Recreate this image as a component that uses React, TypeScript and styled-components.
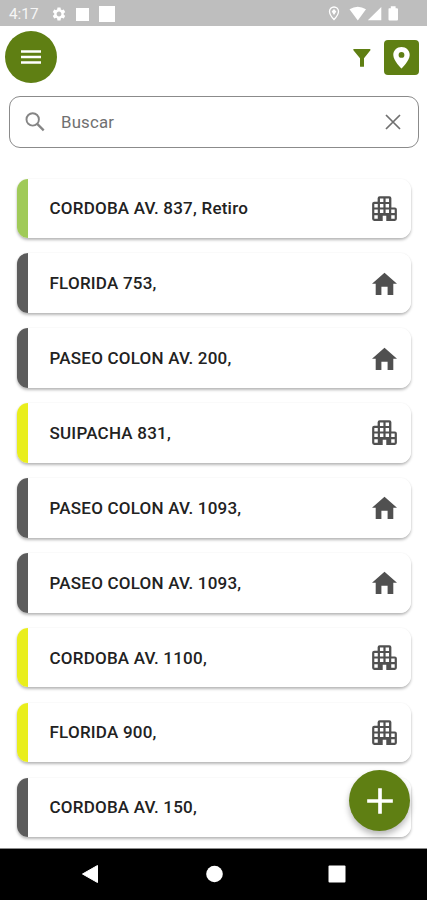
import React from "react";
import styled, { createGlobalStyle } from "styled-components";
import { MdAdd, MdSettings } from "react-icons/md";

const GREEN = "#5f7f13";

const GlobalStyle = createGlobalStyle`
  * { box-sizing: border-box; }
  body { margin: 0; background: #fff; font-family: Roboto, sans-serif; }
  button { border: 0; padding: 0; font: inherit; }
  svg { display: block; flex-shrink: 0; }
`;

const Screen = styled.div`
  width: 427px;
  height: 900px;
  display: flex;
  flex-direction: column;
  background: #fff;
  overflow: hidden;
`;

const StatusBar = styled.div`
  height: 26px;
  flex-shrink: 0;
  display: flex;
  justify-content: space-between;
  align-items: center;
  padding: 2px 29px 0 9px;
  background: #bebebe;
  color: #fff;
`;

const StatusGroup = styled.div`
  display: flex;
  align-items: center;
`;

const Clock = styled.span`
  width: 42px;
  font-size: 15.3px;
  line-height: 20px;
  color: #f6f6f6;
`;

const Notice = styled.span<{ $size: number; $gap: number }>`
  width: ${(p) => p.$size}px;
  height: ${(p) => p.$size}px;
  margin-left: ${(p) => p.$gap}px;
  background: #fff;
`;

const Toolbar = styled.header`
  height: 70px;
  flex-shrink: 0;
  display: flex;
  justify-content: space-between;
  align-items: flex-start;
  padding: 5px 8px 0 5px;
`;

const MenuButton = styled.button`
  width: 52px;
  height: 52px;
  border-radius: 50%;
  display: grid;
  place-items: center;
  background: ${GREEN};
  color: #fff;
`;

const Actions = styled.div`
  display: flex;
  align-items: center;
  gap: 13px;
  padding-top: 9px;
`;

const FilterButton = styled.button`
  background: none;
  color: ${GREEN};
`;

const MapButton = styled.button`
  width: 35px;
  height: 35px;
  border-radius: 4px;
  display: grid;
  place-items: center;
  background: ${GREEN};
  color: #fff;
`;

const SearchField = styled.label`
  height: 52px;
  flex-shrink: 0;
  margin: 0 8px 0 9px;
  display: flex;
  align-items: center;
  padding: 0 12px 0 13px;
  border: 1px solid #8b8b8b;
  border-radius: 11px;
`;

const Placeholder = styled.span`
  flex: 1;
  margin-left: 12px;
  font-size: 16.8px;
  letter-spacing: 0.2px;
  color: #707070;
`;

const List = styled.main`
  flex: 1;
  min-height: 0;
  display: flex;
  flex-direction: column;
  gap: 15.2px;
  padding: 30.5px 16px 0 16.5px;
`;

const Card = styled.article<{ $accent: string }>`
  height: 59.7px;
  flex-shrink: 0;
  display: flex;
  align-items: center;
  justify-content: space-between;
  padding: 0 10.5px 0 33px;
  border-radius: 11px;
  background: linear-gradient(to right, ${(p) => p.$accent} 11.2px, #fff 11.2px);
  box-shadow: 0 2px 3px rgba(0, 0, 0, 0.28), 0 0 2px rgba(0, 0, 0, 0.05);
`;

const Address = styled.span`
  font-size: 17px;
  font-weight: 500;
  letter-spacing: 0.22px;
  color: #222;
  white-space: nowrap;
`;

const IconSlot = styled.span`
  width: 33px;
  display: grid;
  place-items: center;
  color: #505050;
`;

const AddButton = styled.button`
  position: absolute;
  left: 349px;
  top: 770px;
  width: 61px;
  height: 61px;
  border-radius: 50%;
  display: grid;
  place-items: center;
  background: ${GREEN};
  color: #fff;
  box-shadow: 0 4px 6px rgba(0, 0, 0, 0.28);
`;

const NavBar = styled.nav`
  height: 52px;
  flex-shrink: 0;
  display: flex;
  align-items: center;
  justify-content: space-between;
  padding: 0 81px 1px 81px;
  border-top: 1px solid #8c8c8c;
  background: #000;
`;

const Building = () => (
  <svg width="33" height="33" viewBox="0 0 24 24" fill="currentColor" fillRule="evenodd">
    <path d="M17 11.2V4.500Q17 3 15.500 3H8.500Q7 3 7 4.500V7H4.500Q3 7 3 8.500V19.500Q3 21 4.500 21H10.700V17.300H13.300V21H19.500Q21 21 21 19.500V12.700Q21 11.200 19.500 11.200ZM4.600 8.700h2.500v2.500H4.600ZM4.600 12.800h2.500v2.500H4.600ZM4.600 16.900h2.500v2.500H4.600ZM8.700 4.700h2.500v2.500H8.700ZM8.700 8.700h2.500v2.500H8.700ZM8.700 12.800h2.500v2.500H8.700ZM12.800 4.700h2.500v2.500h-2.500ZM12.800 8.700h2.500v2.500h-2.500ZM12.800 12.800h2.500v2.500h-2.500ZM16.900 12.800h2.500v2.500h-2.500ZM16.900 16.900h2.500v2.500h-2.500Z" />
  </svg>
);

const House = () => (
  <svg width="25" height="25" viewBox="0 0 25 25" fill="currentColor">
    <path d="M12.500 1.700 25 12.800H21.300V23.900H15.600V15.700H9.400V23.900H3.700V12.800H0Z" />
  </svg>
);

const SystemStatus = () => (
  <svg width="70" height="18" viewBox="328 5 70 18" fill="#fff">
    <path d="M334 7a4.500 4.500 0 0 0-4.500 4.500c0 3.300 4.500 8 4.500 8s4.500-4.700 4.500-8a4.500 4.500 0 0 0-4.500-4.500Z" fill="none" stroke="#fff" strokeWidth="1.300" />
    <path d="M334 9 336.300 11.500 334 15 331.700 11.500Z" />
    <path d="M349.500 9.300Q357.800 4.200 366 9.300L357.800 20.500ZM367.800 20.300 381.300 7V20.300ZM389 8.200h1.800V6.300h4.800v1.900h1.400q1 0 1 1v10.300q0 1-1 1h-7.500q-1 0-1-1V9.200q0-1 .5-1Z" />
  </svg>
);

type Place = { address: string; accent: string; kind: "house" | "building" };

const GREY = "#5c5c5c";
const YELLOW = "#e9ee1c";

const places: Place[] = [
  { address: "CORDOBA AV. 837, Retiro", accent: "#a0ca58", kind: "building" },
  { address: "FLORIDA 753,", accent: GREY, kind: "house" },
  { address: "PASEO COLON AV. 200,", accent: GREY, kind: "house" },
  { address: "SUIPACHA 831,", accent: YELLOW, kind: "building" },
  { address: "PASEO COLON AV. 1093,", accent: GREY, kind: "house" },
  { address: "PASEO COLON AV. 1093,", accent: GREY, kind: "house" },
  { address: "CORDOBA AV. 1100,", accent: YELLOW, kind: "building" },
  { address: "FLORIDA 900,", accent: YELLOW, kind: "building" },
  { address: "CORDOBA AV. 150,", accent: GREY, kind: "house" },
];

export default function App() {
  return (
    <Screen>
      <GlobalStyle />
      <StatusBar>
        <StatusGroup>
          <Clock>4:17</Clock>
          <MdSettings size={16} />
          <Notice $size={13} $gap={9} />
          <Notice $size={16} $gap={10} />
        </StatusGroup>
        <SystemStatus />
      </StatusBar>
      <Toolbar>
        <MenuButton aria-label="Menú">
          <svg width="20" height="14" viewBox="0 0 20 14" stroke="currentColor" strokeWidth="2.700">
            <path d="M0 1.500H20M0 7H20M0 12.500H20" />
          </svg>
        </MenuButton>
        <Actions>
          <FilterButton aria-label="Filtrar">
            <svg width="18" height="18" viewBox="0 0 18 18" fill="currentColor">
              <path d="M.8 0H16.700Q18 .2 17.200 1.500L11 9.200V17.200Q11 17.700 10.500 17.700H7.500Q7 17.700 7 17.200V9.200L.6 1.500Q-.2.200.8 0Z" />
            </svg>
          </FilterButton>
          <MapButton aria-label="Mapa">
            <svg width="17" height="22" viewBox="0 0 17 22" fill="currentColor" fillRule="evenodd">
              <path d="M8.500 0C3.900 0 .3 3.500.3 8c0 5.900 8.200 13.500 8.200 13.500S16.700 13.900 16.700 8c0-4.500-3.600-8-8.200-8Zm0 5a2.900 2.900 0 1 1 0 5.800 2.900 2.900 0 0 1 0-5.800Z" />
            </svg>
          </MapButton>
        </Actions>
      </Toolbar>
      <SearchField>
        <svg width="26" height="26" viewBox="0 0 26 26" fill="none" stroke="#858585" strokeWidth="1.900">
          <circle cx="9.700" cy="10.400" r="6.200" />
          <path d="M14.200 14.900 20.700 21.400" strokeWidth="2.300" />
        </svg>
        <Placeholder>Buscar</Placeholder>
        <svg width="26" height="26" viewBox="0 0 26 26" fill="none" stroke="#707070" strokeWidth="1.700">
          <path d="M6 6 20 20M20 6 6 20" />
        </svg>
      </SearchField>
      <List>
        {places.map((place, i) => (
          <Card key={i} $accent={place.accent}>
            <Address>{place.address}</Address>
            <IconSlot>{place.kind === "building" ? <Building /> : <House />}</IconSlot>
          </Card>
        ))}
      </List>
      <NavBar>
        <svg width="18" height="20" viewBox="0 0 18 20" fill="#fff"><path d="M1.500 10 16.500 1.500V18.500Z" stroke="#fff" strokeLinejoin="round" /></svg>
        <svg width="18" height="18" viewBox="0 0 18 18" fill="#fff"><circle cx="9.500" cy="9" r="8.300" /></svg>
        <svg width="18" height="18" viewBox="0 0 18 18" fill="#fff"><rect x="0.500" y="0.500" width="17" height="17" rx="1" /></svg>
      </NavBar>
      <AddButton aria-label="Agregar"><MdAdd size={44} /></AddButton>
    </Screen>
  );
}
